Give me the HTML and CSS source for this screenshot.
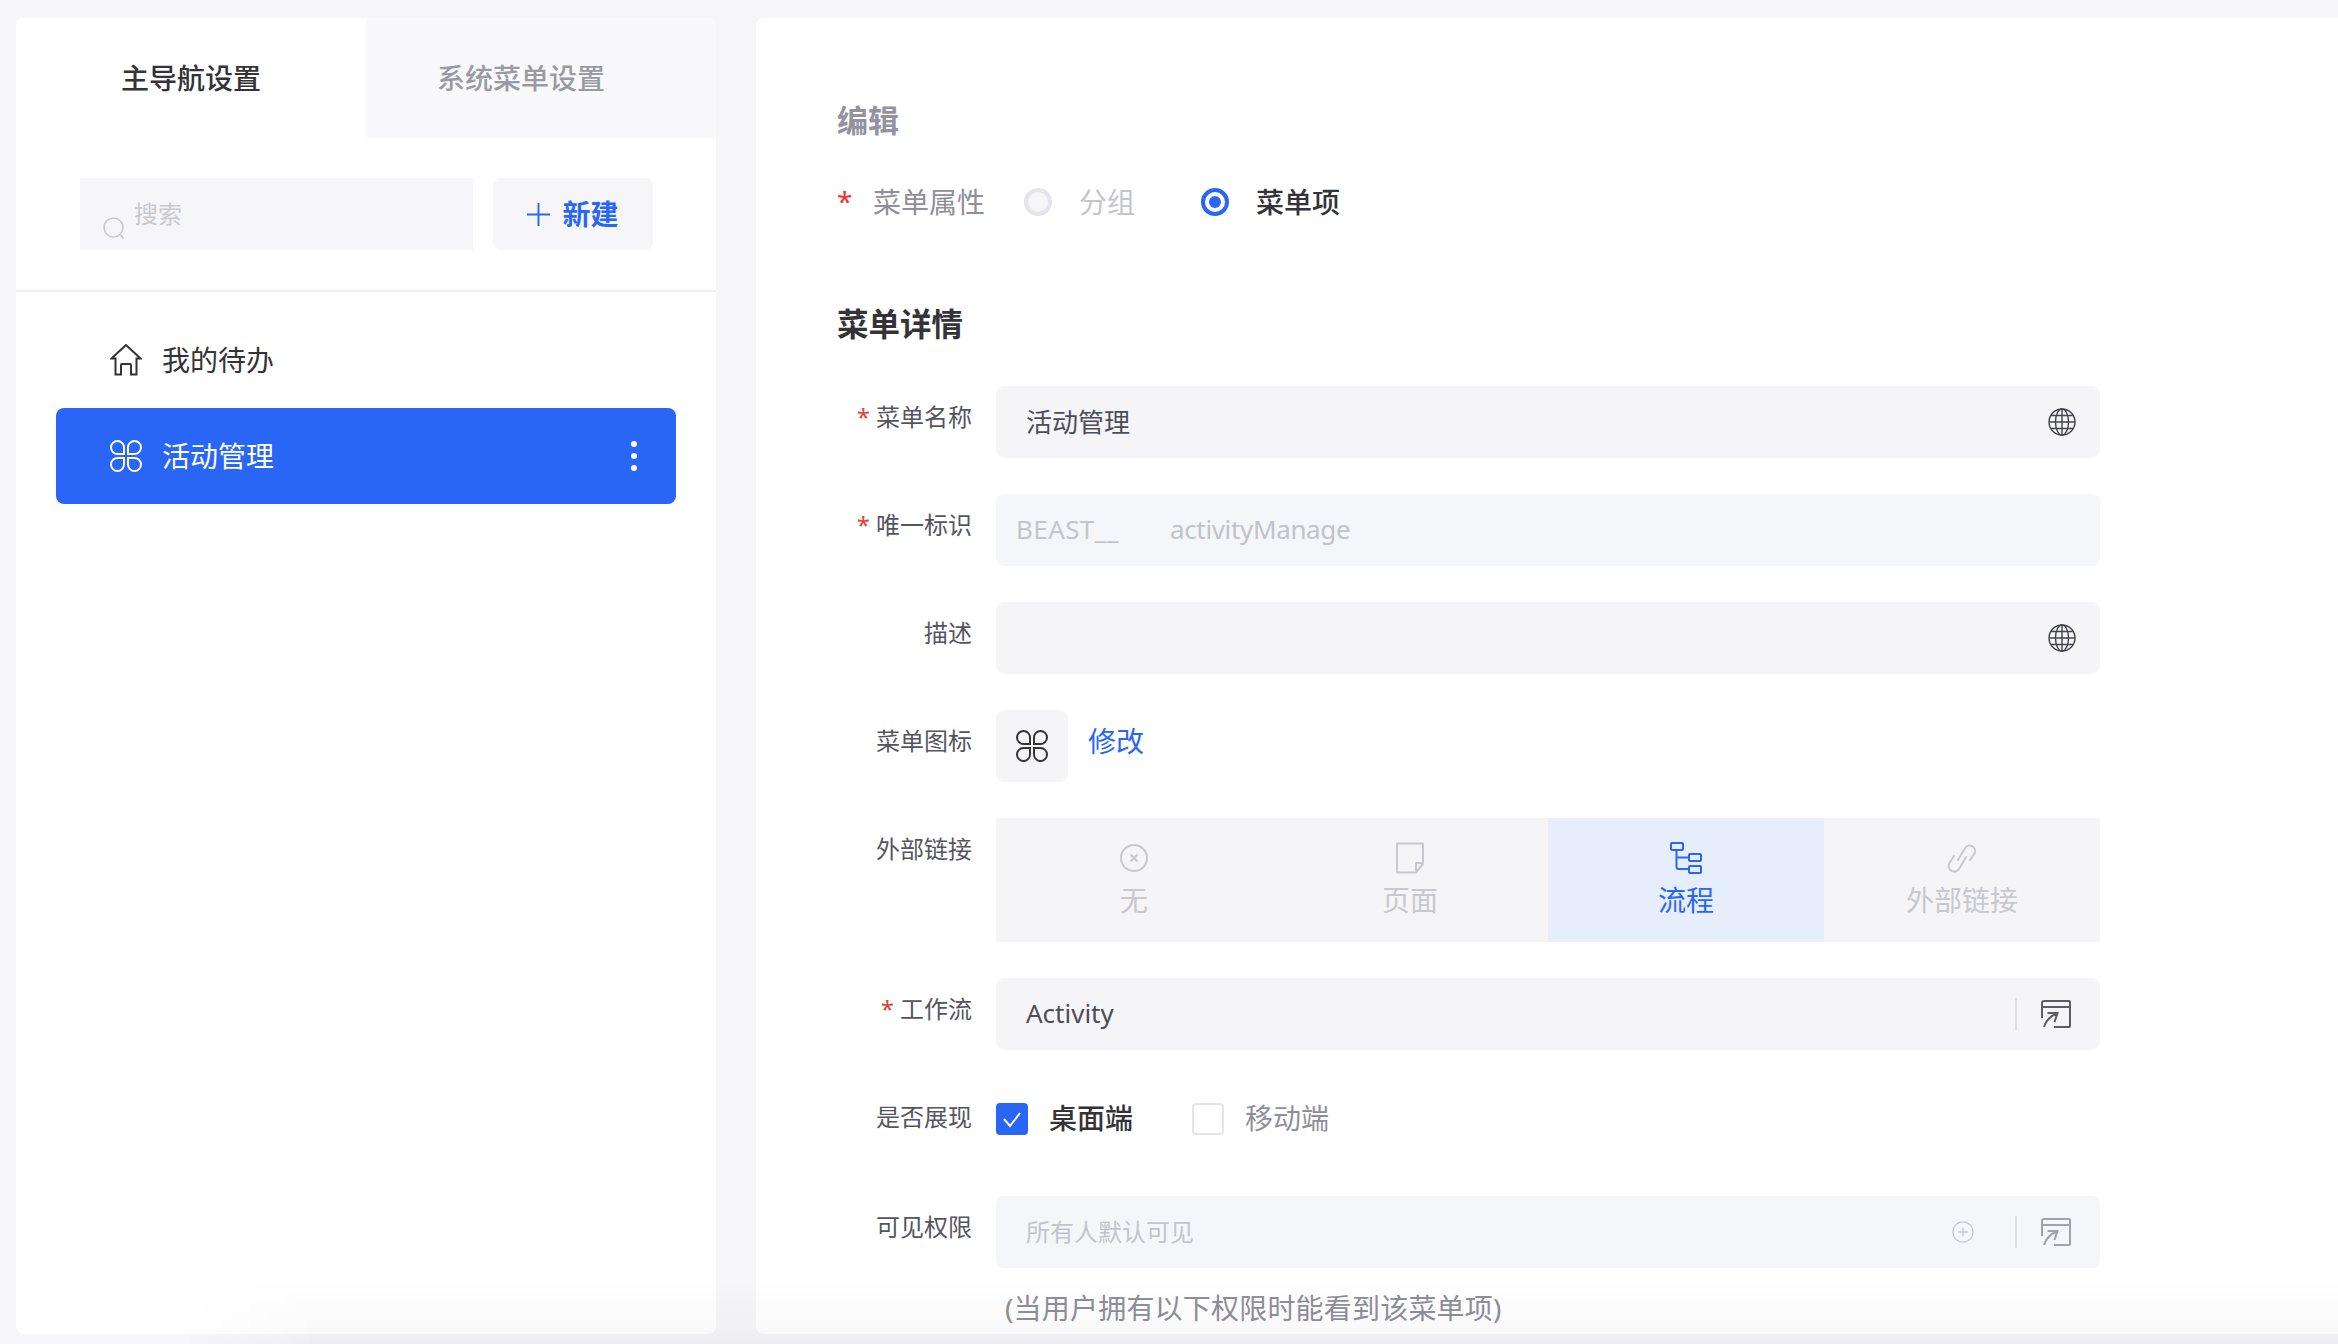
FILE: index.html
```html
<!DOCTYPE html>
<html lang="zh-CN">
<head>
<meta charset="utf-8">
<title>菜单设置</title>
<link rel="stylesheet" href="styles.css">
</head>
<body>
<div class="page">
  <aside class="side">
    <div class="tabs">
      <div class="tab tab-on">主导航设置</div>
      <div class="tab tab-off">系统菜单设置</div>
    </div>
    <div class="tools">
      <div class="search">
        <svg class="search-icon" viewBox="0 0 22 22" fill="none" stroke="#c8c8ce" stroke-width="1.6"><circle cx="10.500" cy="10.500" r="9.500"/><path d="M17.500 18l3 3.500"/></svg>
        <span>搜索</span>
      </div>
      <div class="new-btn">
        <svg class="plus" viewBox="0 0 24 24" stroke="#2a66f6" stroke-width="2" fill="none"><path d="M12 0v24M0 12h24"/></svg>
        <span>新建</span>
      </div>
    </div>
    <nav class="menu">
      <div class="menu-item">
        <svg class="mi-icon" viewBox="0 0 32 32" fill="none" stroke="#333338" stroke-width="2" stroke-linejoin="miter"><path d="M16 1L1.500 14.500H5.500V30.500H11V21a1 1 0 0 1 1-1H20a1 1 0 0 1 1 1V30.500H26.500V14.500H30.500Z"/></svg>
        <span>我的待办</span>
      </div>
      <div class="menu-item menu-active">
        <svg class="mi-icon" viewBox="0 0 32 32" fill="none" stroke="#fff" stroke-width="2"><path d="M14 14H7.500a6.500 6.500 0 1 1 6.500-6.500zM18 14h6.500a6.500 6.500 0 1 0-6.500-6.500zM14 18H7.500a6.500 6.500 0 1 0 6.500 6.500zM18 18h6.500a6.500 6.500 0 1 1-6.500 6.500z"/></svg>
        <span>活动管理</span>
        <div class="dots"><i></i><i></i><i></i></div>
      </div>
    </nav>
  </aside>

  <main class="main">
    <h2 class="edit-title">编辑</h2>
    <div class="attr">
      <span class="attr-star">*</span>
      <span class="attr-label">菜单属性</span>
      <span class="radio radio-off"></span>
      <span class="radio-text off">分组</span>
      <span class="radio radio-on"></span>
      <span class="radio-text on">菜单项</span>
    </div>
    <h2 class="detail-title">菜单详情</h2>

    <div class="row">
      <label class="lab"><b>*</b>菜单名称</label>
      <div class="field"><span class="val">活动管理</span>
        <svg class="globe" viewBox="0 0 28 28" fill="none" stroke="#44444c" stroke-width="1.400"><circle cx="14" cy="14" r="13"/><ellipse cx="14" cy="14" rx="6.500" ry="13"/><path d="M14 1v26M1 14h26M3 7.500h22M3 20.500h22"/></svg>
      </div>
    </div>

    <div class="row">
      <label class="lab"><b>*</b>唯一标识</label>
      <div class="field field-id"><span class="prefix">BEAST__</span><span class="id-val">activityManage</span></div>
    </div>

    <div class="row">
      <label class="lab">描述</label>
      <div class="field"><span class="val"></span>
        <svg class="globe" viewBox="0 0 28 28" fill="none" stroke="#44444c" stroke-width="1.400"><circle cx="14" cy="14" r="13"/><ellipse cx="14" cy="14" rx="6.500" ry="13"/><path d="M14 1v26M1 14h26M3 7.500h22M3 20.500h22"/></svg>
      </div>
    </div>

    <div class="row">
      <label class="lab">菜单图标</label>
      <div class="icon-box">
        <svg class="clover" viewBox="0 0 32 32" fill="none" stroke="#333338" stroke-width="2"><path d="M14 14H7.500a6.500 6.500 0 1 1 6.500-6.500zM18 14h6.500a6.500 6.500 0 1 0-6.500-6.500zM14 18H7.500a6.500 6.500 0 1 0 6.500 6.500zM18 18h6.500a6.500 6.500 0 1 1-6.500 6.500z"/></svg>
      </div>
      <a class="edit-link">修改</a>
    </div>

    <div class="row">
      <label class="lab">外部链接</label>
      <div class="seg">
        <div class="seg-item">
          <svg class="seg-icon" viewBox="0 0 32 32" fill="none" stroke="#c8c8ce" stroke-width="2"><circle cx="16" cy="16" r="13"/><path d="M12.500 12.500l7 7M19.500 12.500l-7 7"/></svg>
          <span>无</span>
        </div>
        <div class="seg-item">
          <svg class="seg-icon" viewBox="0 0 32 32" fill="none" stroke="#c8c8ce" stroke-width="2" stroke-linejoin="round"><path d="M3 1.500H29V22L22 30.500H3ZM29 21H22V30.500"/></svg>
          <span>页面</span>
        </div>
        <div class="seg-item seg-on">
          <svg class="seg-icon" viewBox="0 0 32 32" fill="none" stroke="#2a66f6" stroke-width="2"><rect x="1" y="1" width="12" height="7" rx="1"/><rect x="19" y="12" width="12" height="7" rx="1"/><rect x="19" y="24" width="12" height="7" rx="1"/><path d="M6.500 8V25a2 2 0 0 0 2 2H19M6.500 15.500H19"/></svg>
          <span>流程</span>
        </div>
        <div class="seg-item">
          <svg class="seg-icon" viewBox="0 0 32 32" fill="none" stroke="#c8c8ce" stroke-width="2" stroke-linecap="round"><path d="M12 18L19 6a5.500 5.500 0 0 1 9.500 5.500L24 18"/><path d="M8 14L3.500 21a5.500 5.500 0 0 0 9.500 6L20 15"/></svg>
          <span>外部链接</span>
        </div>
      </div>
    </div>

    <div class="row">
      <label class="lab"><b>*</b>工作流</label>
      <div class="field"><span class="val">Activity</span>
        <span class="sep"></span>
        <svg class="open" viewBox="0 0 30 28" fill="none" stroke="#5c5c62" stroke-width="2"><path d="M1 18V3a2 2 0 0 1 2-2h25a1 1 0 0 1 1 1v24a1 1 0 0 1-1 1H13M1 7h28"/><path d="M3 27c2-6 6-11 13-13.500M6.500 13H16.500L13.500 22"/></svg>
      </div>
    </div>

    <div class="row row-check">
      <label class="lab">是否展现</label>
      <div class="checks">
        <span class="check check-on"><svg viewBox="0 0 32 32" fill="none" stroke="#fff" stroke-width="2"><path d="M8 16l6 7 10-13"/></svg></span>
        <span class="check-text on">桌面端</span>
        <span class="check"></span>
        <span class="check-text off">移动端</span>
      </div>
    </div>

    <div class="row row-last">
      <label class="lab">可见权限</label>
      <div class="field field-soft"><span class="val ph">所有人默认可见</span>
        <svg class="plus-c" viewBox="0 0 24 24" fill="none" stroke="#c8c8d0" stroke-width="1.400"><circle cx="12" cy="12" r="11"/><path d="M12 7v10M7 12h10"/></svg>
        <span class="sep"></span>
        <svg class="open" viewBox="0 0 30 28" fill="none" stroke="#a2a2a8" stroke-width="2"><path d="M1 18V3a2 2 0 0 1 2-2h25a1 1 0 0 1 1 1v24a1 1 0 0 1-1 1H13M1 7h28"/><path d="M3 27c2-6 6-11 13-13.500M6.500 13H16.500L13.500 22"/></svg>
      </div>
    </div>
    <p class="hint">(当用户拥有以下权限时能看到该菜单项)</p>
  </main>
</div>
<div class="fade"></div>
</body>
</html>
```
FILE: styles.css
```css
* { box-sizing: border-box; }
html, body { margin: 0; height: 100%; overflow: hidden; }
body {
  background: #f6f6f8;
  font-family: "Noto Sans", "Noto Sans CJK SC", sans-serif;
  color: #333338;
}
.page {
  height: 1344px;
  padding: 18px 0 10px 16px;
  display: flex;
  gap: 40px;
}

/* side panel */
.side {
  width: 700px;
  flex: none;
  background: #fff;
  border-radius: 8px;
  overflow: hidden;
}
.tabs { display: flex; height: 120px; }
.tab {
  width: 350px;
  display: flex;
  align-items: center;
  justify-content: center;
  font-size: 28px;
  font-weight: 500;
  padding-bottom: 3px;
}
.tab-on { background: #fff; color: #333338; }
.tab-off { background: #f9f9fb; color: #9a9aa4; padding-right: 40px; }
.tools {
  height: 154px;
  padding: 40px 63px 0 64px;
  display: flex;
  gap: 20px;
  border-bottom: 2px solid #f0f0f4;
}
.search {
  width: 393px;
  height: 72px;
  background: #f6f6f8;
  display: flex;
  padding-left: 23px;
  font-size: 24px;
  color: #c8c8ce;
  gap: 9px;
  line-height: 71px;
}
.search-icon { width: 22px; height: 22px; margin-top: 39px; flex: none; }
.new-btn {
  width: 160px;
  height: 72px;
  background: #f6f6f8;
  border-radius: 8px;
  display: flex;
  align-items: center;
  justify-content: center;
  gap: 12px;
  font-size: 28px;
  font-weight: 700;
  color: #2a66f6;
}
.new-btn span { margin-bottom: 3px; }
.plus { width: 23px; height: 23px; flex: none; }
.menu { padding: 20px 40px 0; }
.menu-item {
  height: 96px;
  padding: 0 23px 0 54px;
  display: flex;
  align-items: center;
  gap: 20px;
  font-size: 28px;
  color: #333338;
  border-radius: 8px;
}
.menu-item span { margin-bottom: 3px; }
.menu-active { background: #2a66f6; color: #fff; }
.mi-icon { width: 32px; height: 32px; flex: none; }
.dots {
  margin-left: auto;
  margin-right: 16px;
  display: flex;
  flex-direction: column;
  gap: 6px;
}
.dots i { width: 6px; height: 6px; border-radius: 50%; background: #fff; display: block; }

/* main panel */
.main {
  flex: 1;
  background: #fff;
  border-radius: 8px 0 0 8px;
  padding: 0 0 0 81px;
  overflow: hidden;
}
.edit-title {
  margin: 0;
  padding-top: 80px;
  font-size: 31px;
  line-height: 44px;
  font-weight: 700;
  color: #9292a0;
}
.attr {
  margin-top: 38px;
  height: 44px;
  display: flex;
  align-items: center;
  font-size: 28px;
}
.attr-star { width: 36px; color: #f5302a; font-size: 28px; margin-bottom: 3px; }
.attr-label { width: 151px; color: #8f8f9a; margin-bottom: 3px; }
.radio { width: 28px; height: 28px; border-radius: 50%; flex: none; }
.radio-off { background: #f6f6f8; border: 4px solid #e4e4ea; }
.radio-on { background: #fff; border: 4px solid #2a66f6; position: relative; }
.radio-on::after {
  content: "";
  position: absolute;
  left: 4px;
  top: 4px;
  width: 12px;
  height: 12px;
  border-radius: 50%;
  background: #2a66f6;
}
.radio-text { margin-left: 27px; margin-bottom: 3px; }
.radio-text.off { color: #c4c4cc; width: 122px; }
.radio-text.on { color: #333338; font-weight: 500; }
.detail-title {
  margin: 0;
  padding-top: 78px;
  font-size: 31.5px;
  line-height: 44px;
  font-weight: 700;
  color: #333338;
  margin-bottom: 40px;
}
.row { display: flex; margin-bottom: 36px; width: 1263px; }
.lab {
  width: 135px;
  margin-right: 24px;
  flex: none;
  text-align: right;
  font-size: 24px;
  line-height: 62px;
  color: #55555f;
}
.lab b { font-weight: 400; color: #e0433a; margin-right: 6px; }
.field {
  flex: 1;
  height: 72px;
  background: #f5f5f8;
  border-radius: 8px;
  display: flex;
  align-items: center;
  padding: 0 24px 0 30px;
  font-size: 26px;
  color: #4d4d57;
}
.val { flex: 1; margin-bottom: 3px; }
.val.ph { color: #c4c4cc; font-size: 24px; }
.globe { width: 28px; height: 28px; flex: none; }
.field-id { padding: 0; color: #c2c6cc; background: #f5f6fa; }
.prefix { width: 148px; padding-left: 20px; letter-spacing: .4px; margin-bottom: 3px; }
.id-val { padding-left: 26px; letter-spacing: -.35px; color: #c2c2ca; margin-bottom: 3px; }
.icon-box {
  width: 72px;
  height: 72px;
  background: #f5f5f8;
  border-radius: 8px;
  display: flex;
  align-items: center;
  justify-content: center;
}
.clover { width: 32px; height: 32px; }
.edit-link {
  margin-left: 20px;
  font-size: 28px;
  line-height: 62px;
  color: #2a66f6;
}
.seg {
  flex: 1;
  display: grid;
  grid-template-columns: repeat(4, 276px);
  height: 124px;
  background: #f5f5f8;
}
.seg-item {
  display: flex;
  flex-direction: column;
  align-items: center;
  padding-top: 24px;
  font-size: 28px;
  line-height: 40px;
  color: #c8c8ce;
}
.seg-on { background: #e6eefb; color: #2a66f6; }
.seg-icon { width: 32px; height: 32px; margin-bottom: 6px; flex: none; }
.sep { width: 2px; height: 32px; background: #dedee2; flex: none; }
.open { width: 30px; height: 28px; margin-left: 24px; margin-right: 5px; flex: none; margin-top: -1px; }
.plus-c { width: 22px; height: 22px; margin-right: 41px; flex: none; }
.field-soft { background: #f5f6f9; }
.row-check { height: 74px; }
.checks { display: flex; align-items: flex-start; padding-top: 17px; font-size: 28px; }
.check {
  width: 32px;
  height: 32px;
  border-radius: 4px;
  border: 2px solid #e4e4ea;
  background: #fff;
  flex: none;
}
.check-on { background: #2a66f6; border: none; }
.check-on svg { width: 32px; height: 32px; display: block; }
.check-text { line-height: 30px; margin-left: 21px; }
.check-text.on { color: #333338; width: 143px; font-weight: 500; }
.check-text.off { color: #8f8f9a; }
.row-last { margin-bottom: 0; }
.hint {
  margin: 20px 0 0 168px;
  font-size: 28px;
  line-height: 40px;
  letter-spacing: .2px;
  color: #8f8f9a;
}
.fade {
  position: fixed;
  left: 0;
  right: 0;
  bottom: 0;
  height: 64px;
  background: linear-gradient(to bottom, rgba(0,0,0,0), rgba(0,0,0,.02) 70%, rgba(0,0,0,.03));
  -webkit-mask-image: linear-gradient(to right, transparent 180px, #000 320px);
  mask-image: linear-gradient(to right, transparent 180px, #000 320px);
  pointer-events: none;
}
```
